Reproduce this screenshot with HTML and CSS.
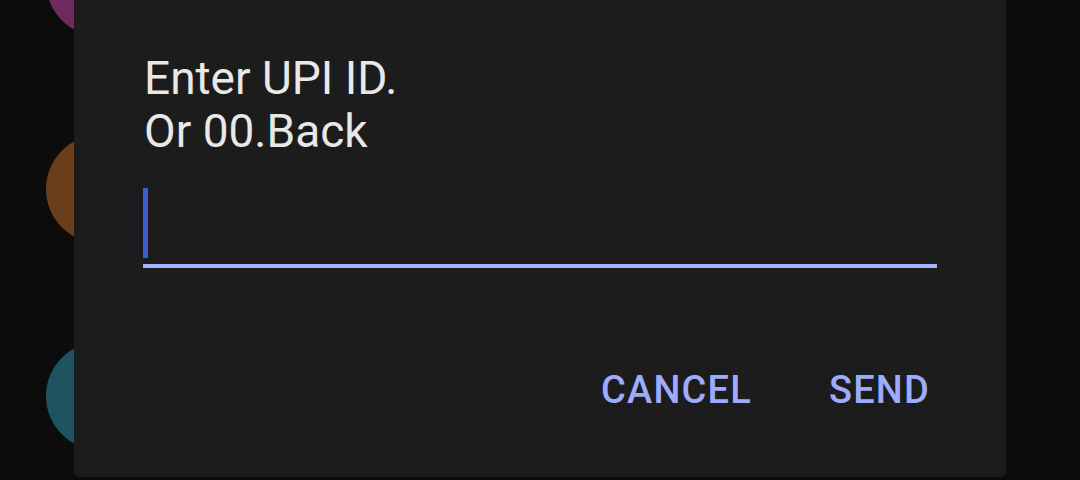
FILE: index.html
```html
<!DOCTYPE html>
<html>
<head>
<meta charset="utf-8">
<link rel="stylesheet" href="styles.css">
</head>
<body>
<div class="screen">
  <div class="list">
    <div class="avatar magenta"></div>
    <div class="avatar orange"></div>
    <div class="avatar teal"></div>
  </div>
  <div class="dialog">
    <div class="message">Enter UPI ID.<br>Or 00.Back</div>
    <div class="field"><span class="cursor"></span></div>
    <div class="actions">
      <span class="btn">CANCEL</span>
      <span class="btn">SEND</span>
    </div>
  </div>
</div>
</body>
</html>
```
FILE: styles.css
```css
html, body {
  margin: 0;
  padding: 0;
  background: #0c0c0c;
}
.screen {
  position: relative;
  width: 1080px;
  height: 480px;
  overflow: hidden;
  font-family: Roboto, "Noto Sans", sans-serif;
}
.list {
  display: flex;
  flex-direction: column;
  gap: 99px;
  padding-left: 46px;
  margin-top: -72px;
}
.avatar {
  width: 108px;
  height: 108px;
  border-radius: 50%;
}
.magenta { background: #6e2b5e; }
.orange { background: #6b3e1b; }
.teal { background: #1e5462; }
.dialog {
  position: absolute;
  left: 74px;
  top: 0;
  width: 932px;
  height: 477px;
  background: #1c1c1c;
  border-radius: 0 0 6px 6px;
  box-sizing: border-box;
  padding: 52px 69px 0 69px;
  display: flex;
  flex-direction: column;
}
.message {
  color: #e8e8e8;
  font-size: 46px;
  line-height: 53px;
  padding-left: 1px;
}
.field {
  margin-top: 32px;
  height: 74px;
  border-bottom: 4px solid #a6b3ff;
  position: relative;
}
.cursor {
  position: absolute;
  left: 0;
  top: -2px;
  width: 5px;
  height: 70px;
  background: #3a61cf;
}
.actions {
  display: flex;
  justify-content: flex-end;
  gap: 77px;
  margin-top: 100px;
  padding-right: 7px;
}
.btn {
  color: #9eabff;
  font-size: 38px;
  font-weight: 500;
  letter-spacing: 1.2px;
  line-height: 44px;
}
```
